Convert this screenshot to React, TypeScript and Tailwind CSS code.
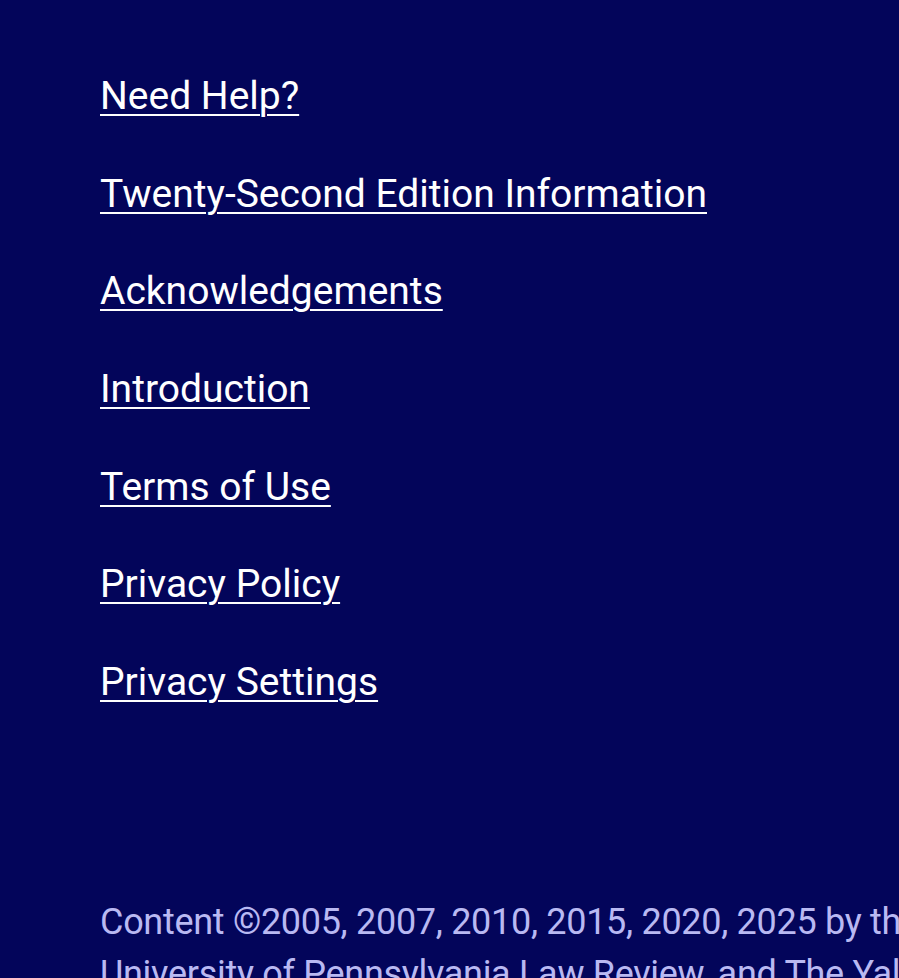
import React from "react";

const links = [
  "Need Help?",
  "Twenty-Second Edition Information",
  "Acknowledgements",
  "Introduction",
  "Terms of Use",
  "Privacy Policy",
  "Privacy Settings",
];

export default function App() {
  return (
    <div
      className="h-[978px] w-full overflow-hidden bg-[#03055a] pl-[100px] pt-[73px]"
      style={{ fontFamily: "Roboto, 'Liberation Sans', sans-serif" }}
    >
      <ul className="flex flex-col gap-[51.7px]">
        {links.map((l) => (
          <li key={l} className="text-[39px] leading-[46px]">
            <a
              href="#"
              className="text-white underline decoration-2 underline-offset-[5px]"
            >
              {l}
            </a>
          </li>
        ))}
      </ul>
      <p className="mt-[191px] whitespace-nowrap text-[36px] leading-[52px] tracking-[-0.3px] text-[#b9b9f2]">
        Content ©2005, 2007, 2010, 2015, 2020, 2025 by the Columbia Law Review, the Harvard Law Review, the
        <br />
        University of Pennsylvania Law Review, and The Yale Law Journal.
      </p>
    </div>
  );
}
